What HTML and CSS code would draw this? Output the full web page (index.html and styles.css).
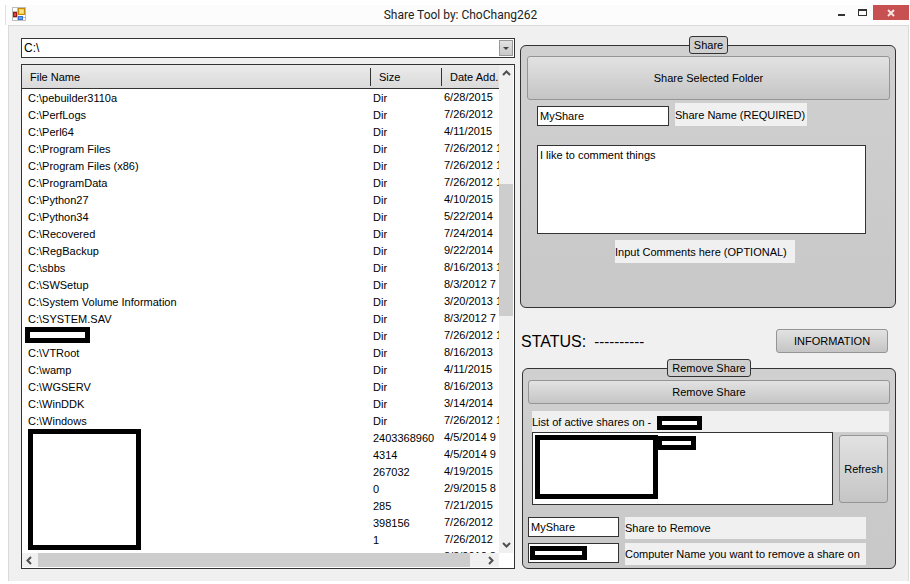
FILE: index.html
```
<!DOCTYPE html>
<html lang="en">
<head>
<meta charset="utf-8">
<title>Share Tool by: ChoChang262</title>
<link rel="stylesheet" href="styles.css">
</head>
<body>
<div class="window">
  <header class="titlebar">
    <svg class="app-icon" viewBox="0 0 14 14" width="14" height="14" aria-hidden="true">
      <rect x="0.5" y="0.5" width="13" height="13" fill="#fff" stroke="#bdbdbd"/>
      <path d="M5.5 0v14M0 4.500h14M0 10.500h14" stroke="#bdbdbd" fill="none"/>
      <rect x="6.500" y="1.500" width="6" height="6" fill="#fbd34c" stroke="#c08a10"/>
      <rect x="8" y="3" width="3" height="3" fill="#fde58c"/>
      <rect x="1.500" y="5.500" width="3" height="4" fill="#d9483b" stroke="#a3150f"/>
      <rect x="6.500" y="9.500" width="4" height="3" fill="#6aa0f0" stroke="#3a70d0"/>
    </svg>
    <h1 class="title">Share Tool by: ChoChang262</h1>
    <div class="caption">
      <button class="cap" type="button" aria-label="Minimize"><svg width="8" height="14" viewBox="0 0 8 14"><path d="M0 8h7v2H0z" fill="#333"/></svg></button>
      <button class="cap" type="button" aria-label="Maximize"><svg width="10" height="14" viewBox="0 0 10 14"><path d="M0 3h9v7H0zM1 5v4h7V5z" fill="#333" fill-rule="evenodd"/></svg></button>
      <button class="cap cap-close" type="button" aria-label="Close"><svg width="8" height="8" viewBox="0 0 8 8"><path d="M1 1l6 6M7 1l-6 6" stroke="#f6e4e4" stroke-width="2"/></svg></button>
    </div>
  </header>
  <main class="client">
    <section class="browser">
      <div class="combo">
        <select aria-label="Drive"><option>C:\</option></select>
        <span class="combo-arrow"><svg width="6" height="3" viewBox="0 0 6 3"><path d="M0 0h6L3 3z" fill="#444"/></svg></span>
      </div>
      <div class="list">
        <div class="list-view">
          <table>
            <colgroup><col class="c-name"><col class="c-size"><col></colgroup>
            <thead><tr><th>File Name</th><th>Size</th><th>Date Add.</th></tr></thead>
            <tbody>
              <tr><td>C:\pebuilder3110a</td><td>Dir</td><td>6/28/2015</td></tr>
              <tr><td>C:\PerfLogs</td><td>Dir</td><td>7/26/2012</td></tr>
              <tr><td>C:\Perl64</td><td>Dir</td><td>4/11/2015</td></tr>
              <tr><td>C:\Program Files</td><td>Dir</td><td>7/26/2012 1</td></tr>
              <tr><td>C:\Program Files (x86)</td><td>Dir</td><td>7/26/2012 1</td></tr>
              <tr><td>C:\ProgramData</td><td>Dir</td><td>7/26/2012 1</td></tr>
              <tr><td>C:\Python27</td><td>Dir</td><td>4/10/2015</td></tr>
              <tr><td>C:\Python34</td><td>Dir</td><td>5/22/2014</td></tr>
              <tr><td>C:\Recovered</td><td>Dir</td><td>7/24/2014</td></tr>
              <tr><td>C:\RegBackup</td><td>Dir</td><td>9/22/2014</td></tr>
              <tr><td>C:\sbbs</td><td>Dir</td><td>8/16/2013 1</td></tr>
              <tr><td>C:\SWSetup</td><td>Dir</td><td>8/3/2012 7</td></tr>
              <tr><td>C:\System Volume Information</td><td>Dir</td><td>3/20/2013 1</td></tr>
              <tr><td>C:\SYSTEM.SAV</td><td>Dir</td><td>8/3/2012 7</td></tr>
              <tr><td><span class="mask mask-row"></span></td><td>Dir</td><td>7/26/2012 1</td></tr>
              <tr><td>C:\VTRoot</td><td>Dir</td><td>8/16/2013</td></tr>
              <tr><td>C:\wamp</td><td>Dir</td><td>4/11/2015</td></tr>
              <tr><td>C:\WGSERV</td><td>Dir</td><td>8/16/2013</td></tr>
              <tr><td>C:\WinDDK</td><td>Dir</td><td>3/14/2014</td></tr>
              <tr><td>C:\Windows</td><td>Dir</td><td>7/26/2012 1</td></tr>
              <tr><td><span class="mask mask-files"></span></td><td>2403368960</td><td>4/5/2014 9</td></tr>
              <tr><td></td><td>4314</td><td>4/5/2014 9</td></tr>
              <tr><td></td><td>267032</td><td>4/19/2015</td></tr>
              <tr><td></td><td>0</td><td>2/9/2015 8</td></tr>
              <tr><td></td><td>285</td><td>7/21/2015</td></tr>
              <tr><td></td><td>398156</td><td>7/26/2012</td></tr>
              <tr><td></td><td>1</td><td>7/26/2012</td></tr>
              <tr><td></td><td></td><td>8/3/2012 8</td></tr>
            </tbody>
          </table>
        </div>
        <div class="vbar">
          <svg width="9" height="6" viewBox="0 0 9 6"><path d="M1 5l3.500-3.500L8 5" stroke="#505050" stroke-width="2" fill="none"/></svg>
          <div class="vtrack"><div class="vthumb"></div></div>
          <svg width="9" height="6" viewBox="0 0 9 6"><path d="M1 1l3.500 3.500L8 1" stroke="#505050" stroke-width="2" fill="none"/></svg>
        </div>
        <div class="hbar">
          <svg width="6" height="9" viewBox="0 0 6 9"><path d="M5 1L1.500 4.500L5 8" stroke="#505050" stroke-width="2" fill="none"/></svg>
          <div class="hthumb"></div>
          <svg width="6" height="9" viewBox="0 0 6 9"><path d="M1 1l3.500 3.500L1 8" stroke="#505050" stroke-width="2" fill="none"/></svg>
        </div>
      </div>
    </section>

    <section class="side">
      <fieldset class="group group-share">
        <legend>Share</legend>
        <button class="btn btn-tall" type="button">Share Selected Folder</button>
        <div class="share-fields">
          <div class="line">
            <input class="field field-name" id="share-name" type="text" value="MyShare">
            <label class="tag tag-name" for="share-name">Share Name (REQUIRED)</label>
          </div>
          <textarea class="field comments" id="comments">I like to comment things</textarea>
          <label class="tag tag-comments" for="comments">Input Comments here (OPTIONAL)</label>
        </div>
      </fieldset>

      <div class="status">
        <p class="status-text">STATUS:<span class="dashes">----------</span></p>
        <button class="btn btn-info" type="button">INFORMATION</button>
      </div>

      <fieldset class="group group-remove">
        <legend>Remove Share</legend>
        <button class="btn btn-remove" type="button">Remove Share</button>
        <div class="shares">
          <div class="tag shares-head">List of active shares on -<span class="mask mask-host"></span></div>
          <div class="shares-row">
            <div class="listbox"><span class="mask mask-list"></span><span class="mask mask-item"></span></div>
            <button class="btn btn-refresh" type="button">Refresh</button>
          </div>
        </div>
        <div class="remove-fields">
          <input class="field" id="remove-name" type="text" value="MyShare">
          <label class="tag" for="remove-name">Share to Remove</label>
          <div class="masked"><input class="field" id="computer" type="text"><span class="mask mask-computer"></span></div>
          <label class="tag" for="computer">Computer Name you want to remove a share on</label>
        </div>
      </fieldset>
    </section>
  </main>
</div>
</body>
</html>
```
FILE: styles.css
```
* { box-sizing: border-box; }

body {
  margin: 0;
  background: #fff;
  color: #000;
  font: 11px/16px "Liberation Sans", Arial, sans-serif;
}

button, input, select, textarea { font: inherit; color: inherit; margin: 0; }

.window {
  display: flex;
  flex-direction: column;
  height: 100vh;
  padding: 5px 1px 3px 5px;
}

/* Title bar */
.titlebar {
  display: grid;
  grid-template-columns: 1fr auto 1fr;
  align-items: start;
  height: 20px;
  padding-left: 6px;
  border-left: 1px solid #e0e0e0;
  background: #fcfcfc;
}
.app-icon { margin-top: 2px; }
.title { margin: 0; font: 12px/20px Roboto, sans-serif; color: #222; }
.caption { display: flex; justify-content: flex-end; }
.cap { display: flex; justify-content: center; align-items: center; width: 21px; height: 15px; padding: 0; border: 0; background: none; }
.cap-close { width: 36px; background: #c75050; }

/* Client area */
.client {
  flex: 1;
  min-height: 0;
  display: grid;
  grid-template-columns: 494fr 376fr;
  gap: 5px;
  margin-left: 3px;
  padding: 10px 12px 12px;
  border: 1px solid #dadada;
  border-bottom: 0;
  background: #f0f0f0;
}

.browser { display: flex; flex-direction: column; gap: 6px; min-height: 0; padding-top: 2px; }

.combo { position: relative; height: 20px; }
.combo select {
  appearance: none;
  display: block;
  width: 100%;
  height: 20px;
  padding: 0 2px;
  border: 1px solid #333;
  border-radius: 0;
  background: #fff;
  font-size: 12px;
}
.combo-arrow {
  position: absolute;
  top: 2px;
  right: 2px;
  display: flex;
  align-items: center;
  justify-content: center;
  width: 14px;
  height: 16px;
  border: 1px solid #999;
  background: linear-gradient(#e2e2e2, #c8c8c8);
  pointer-events: none;
}

.list {
  flex: 1;
  min-height: 0;
  display: grid;
  grid-template-columns: 1fr 14px;
  grid-template-rows: 1fr 14px;
  padding: 0 1px 1px 0;
  border: 1px solid #333;
  background: #fff;
}
.list-view { overflow: hidden; min-height: 0; }
table { width: 100%; table-layout: fixed; border-collapse: separate; border-spacing: 0; }
.c-name { width: 348px; }
.c-size { width: 71px; }
th {
  height: 24px;
  padding: 0 0 0 9px;
  border-bottom: 1px solid #333;
  background: linear-gradient(90deg, #333, #333) 0 3px / 1px 18px no-repeat, linear-gradient(#ebebeb, #dadada);
  font-weight: 400;
  text-align: left;
  white-space: nowrap;
}
th:first-child { padding-left: 8px; background: linear-gradient(#ebebeb, #dadada); }
td { position: relative; height: 17px; padding: 1px 0 0 3px; line-height: 16px; white-space: nowrap; }
td:first-child { padding-left: 6px; }
td:last-child { padding: 0 0 1px 3px; }

.vbar { display: flex; flex-direction: column; align-items: center; padding: 5px 0; background: #f0f0f0; }
.vtrack { flex: 1; width: 100%; padding-top: 108px; }
.vthumb { height: 132px; background: #cdcdcd; }
.hbar { display: flex; align-items: center; padding: 0 5px 0 4px; background: #f0f0f0; }
.hthumb { flex: 1; height: 14px; margin: 0 18px 0 6px; background: #cdcdcd; }

/* Blacked-out values */
.mask { display: block; border: 5px solid #000; background: #fff; }
.mask-row { position: absolute; top: 0; left: 3px; width: 65px; height: 16px; }
.mask-files { position: absolute; z-index: 1; top: 0; left: 6px; width: 113px; height: 121px; }
.mask-host { width: 45px; height: 14px; margin: 2px 0 0 6px; }
.mask-list { position: absolute; top: 2px; left: 2px; width: 123px; height: 64px; }
.mask-item { position: absolute; top: 3px; left: 124px; width: 39px; height: 14px; }
.mask-computer { position: absolute; top: 3px; left: 2px; width: 57px; height: 14px; }

/* Right column */
.side { display: flex; flex-direction: column; min-width: 0; }
.group {
  min-width: 0;
  margin: 0;
  padding: 2px 5px 0 6px;
  border: 1px solid #333;
  border-radius: 6px;
  background: linear-gradient(#d0d0d0, #c8c8c8);
}
.group-share { height: 272px; }
.group-remove { flex: 1; margin-left: 2px; padding: 3px 5px 0; }
legend {
  height: 18px;
  margin: 0 auto;
  padding: 0 4px;
  border: 1px solid #333;
  border-radius: 3px;
  background: #cfcfcf;
  line-height: 16px;
}

.btn {
  display: block;
  padding: 0;
  border: 1px solid #959595;
  border-radius: 3px;
  background: linear-gradient(#e2e2e2, #c5c5c5);
}
.btn-tall { width: 100%; height: 44px; }
.btn-info { width: 112px; height: 24px; }
.btn-remove { width: 100%; height: 24px; }
.btn-refresh { width: 49px; height: 68px; }

.field {
  display: block;
  width: 100%;
  height: 20px;
  padding: 0 2px;
  border: 1px solid #333;
  border-radius: 0;
  background: #fff;
  outline: 0;
}
.tag { display: block; background: #f0f0f0; white-space: nowrap; }

.share-fields { padding: 3px 24px 0 10px; }
.line { display: flex; align-items: flex-end; gap: 6px; }
.field-name { width: 132px; }
.tag-name { width: 132px; height: 23px; line-height: 24px; }
.comments { height: 89px; margin-top: 19px; padding: 1px 2px; resize: none; }
.tag-comments { width: 180px; height: 23px; margin: 6px auto 0 78px; line-height: 24px; }

.status { display: flex; justify-content: space-between; align-items: center; height: 51px; padding: 14px 8px 0 1px; }
.status-text { margin: 0; padding-top: 2px; font-size: 16px; line-height: 24px; }
.dashes { margin-left: 8px; font-size: 15px; }

.shares { padding: 7px 1px 0 4px; }
.shares-head { display: flex; align-items: center; height: 21px; }
.shares-row { display: flex; align-items: center; gap: 6px; padding-right: 1px; }
.listbox { position: relative; flex: 1; height: 73px; border: 1px solid #333; background: #fff; }
.remove-fields {
  display: grid;
  grid-template-columns: 91px 1fr;
  gap: 4px 6px;
  padding: 12px 24px 0 0;
}
.remove-fields .tag { height: 22px; line-height: 22px; }
.masked { position: relative; }
```
